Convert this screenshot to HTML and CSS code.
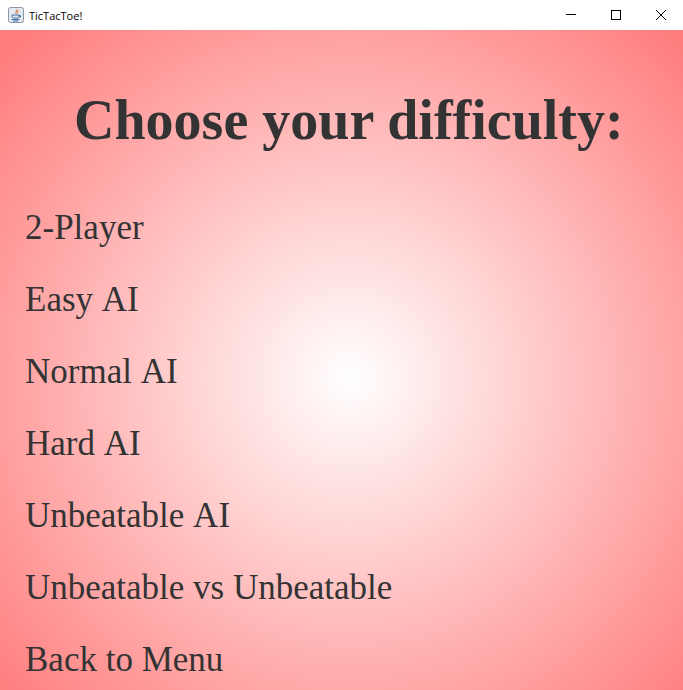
FILE: index.html
```html
<html lang="en">
<head>
    <meta charset="UTF-8">
    <meta name="viewport" content="width=device-width, initial-scale=1.0">
    <title>TicTacToe!</title>
    <link rel="stylesheet" href="styles.css">
</head>
<body>

    <div class="titlebar">
        <div class="titlebar-left">
            <svg class="app-icon" width="16" height="16" viewBox="0 0 16 16">
                <rect x="0.5" y="0.5" width="15" height="15" rx="2" fill="#e4e9f0" stroke="#8b97a8"/>
                <path d="M8.5 2.5c1 1.500-1.500 2.500-.5 4M10 3.500c.5 1-1 1.500-.5 2.800" fill="none" stroke="#d9531e" stroke-width="1"/>
                <path d="M4 8h7v1.500c0 1-1 1.500-2 1.500H6c-1 0-2-.5-2-1.500zM11 8.500h1.500v1.500H11" fill="none" stroke="#3f6f9f" stroke-width="1"/>
                <path d="M3.500 12.500h8M5 14h5" stroke="#3f6f9f" stroke-width="1"/>
            </svg>
            <span class="app-title">TicTacToe!</span>
        </div>
        <div class="window-buttons">
            <div class="window-button">
                <svg width="10" height="10" viewBox="0 0 10 10"><path d="M0 4.500h10" stroke="#000" stroke-width="1"/></svg>
            </div>
            <div class="window-button">
                <svg width="10" height="10" viewBox="0 0 10 10"><rect x="0.5" y="0.500" width="9" height="9" fill="none" stroke="#000"/></svg>
            </div>
            <div class="window-button">
                <svg width="10" height="10" viewBox="0 0 10 10"><path d="M0 0l10 10M10 0L0 10" stroke="#000" stroke-width="1"/></svg>
            </div>
        </div>
    </div>

    <div class="tela">
        <h1>Choose your difficulty:</h1>
        <ul class="menu">
            <li>2-Player</li>
            <li>Easy AI</li>
            <li>Normal AI</li>
            <li>Hard AI</li>
            <li>Unbeatable AI</li>
            <li>Unbeatable vs Unbeatable</li>
            <li>Back to Menu</li>
        </ul>
    </div>

</body>
</html>
```

FILE: styles.css
```css
html, body {
    height: 100%;
}
body {
    display: flex;
    flex-direction: column;
    margin: 0;
    overflow: hidden;
    font-family: "Liberation Serif", "Times New Roman", serif;
    color: #333;
}
.titlebar {
    display: flex;
    justify-content: space-between;
    height: 30px;
    background-color: #fff;
}
.titlebar-left {
    display: flex;
    align-items: center;
    gap: 5px;
    padding-left: 8px;
}
.app-title {
    font-family: "Open Sans", "Noto Sans", sans-serif;
    font-size: 11px;
    color: #000;
}
.window-buttons {
    display: flex;
}
.window-button {
    display: flex;
    justify-content: center;
    align-items: center;
    width: 45px;
    height: 29px;
}
.tela {
    flex: 1;
    padding: 0 25px;
    background: radial-gradient(circle 465px at 350px 348px, #fff 0%, #ff7f7f 100%);
}
h1 {
    margin: 0;
    padding-top: 58px;
    padding-left: 49px;
    font-size: 56px;
    line-height: 64px;
    white-space: nowrap;
}
.menu {
    display: flex;
    flex-direction: column;
    gap: 32px;
    margin: 0;
    padding: 0;
    padding-top: 56px;
    list-style: none;
    font-size: 35px;
    line-height: 40px;
    font-kerning: none;
}
```
